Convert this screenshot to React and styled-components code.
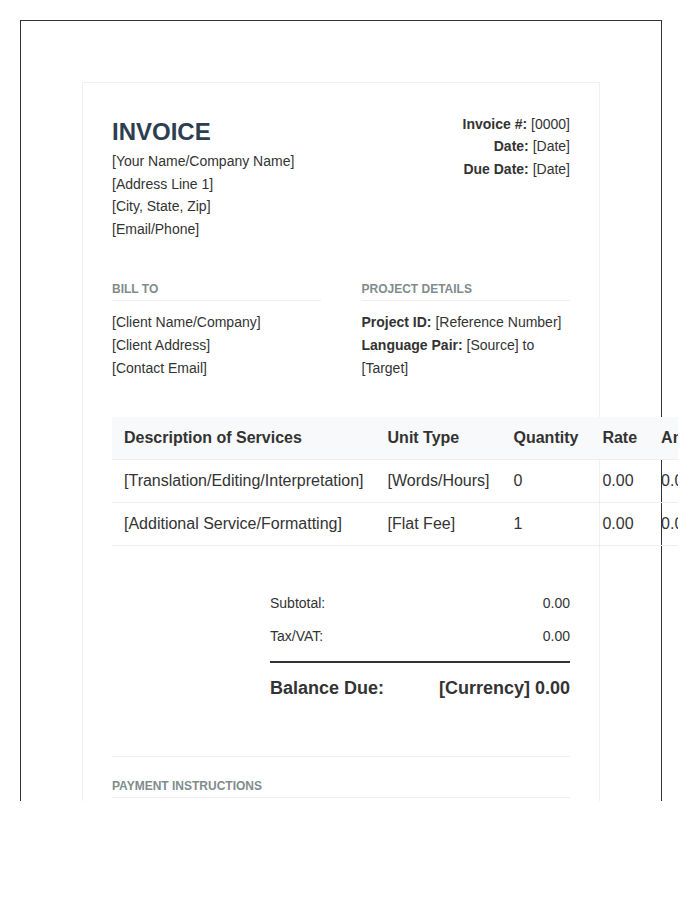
import React from "react";
import styled, { createGlobalStyle } from "styled-components";

const Global = createGlobalStyle`
  body { margin: 0; font-family: "Liberation Sans", Arial, sans-serif; color: #333; background: #fff; }
`;

const Viewport = styled.div`
  width: 678px;
  height: 801px;
  overflow: hidden;
`;
const Paper = styled.div`
  margin: 20px;
  width: 518px;
  border: 1px solid #333;
  padding: 61px 61px 61px 61px;
  min-height: 900px;
`;
const Card = styled.div`
  width: 458px;
  border: 1px solid #f0f0f0;
  padding: 30px 29px;
  font-size: 14px;
  line-height: 1.6;
`;
const Header = styled.div`
  display: flex;
  justify-content: space-between;
  align-items: flex-start;
`;
const Title = styled.h1`
  margin: 4px 0 3px;
  font-size: 24px;
  line-height: 30px;
  color: #2c3e50;
`;
const Meta = styled.div`
  text-align: right;
  line-height: 22.4px;
`;
const Lines = styled.div`
  line-height: 22.6px;
`;
const Grid = styled.div`
  display: grid;
  grid-template-columns: 1fr 1fr;
  gap: 41px;
  margin-top: 40px;
`;
const SectionTitle = styled.div`
  font-size: 12px;
  font-weight: bold;
  color: #7f8c8d;
  text-transform: uppercase;
  border-bottom: 1px solid #eee;
  padding-bottom: 2px;
  margin-bottom: 10px;
  line-height: 18px;
`;
const Table = styled.table`
  margin-top: 38px;
  border-collapse: collapse;
  white-space: nowrap;
  font-size: 16px;
  line-height: 18px;
  th {
    background: #f8f9fa;
    text-align: left;
    font-weight: bold;
    padding: 12px;
    border-bottom: 1px solid #eee;
  }
  td {
    padding: 12px;
    border-bottom: 1px solid #eee;
  }
`;
const Totals = styled.div`
  margin: 41px 0 0 auto;
  width: 300px;
`;
const TotalRow = styled.div`
  display: flex;
  justify-content: space-between;
  padding: 5px 0;
  line-height: 23px;
`;
const Balance = styled(TotalRow)`
  border-top: 2px solid #333;
  margin-top: 8px;
  padding-top: 14px;
  font-size: 18px;
  font-weight: bold;
`;
const Payment = styled.div`
  margin-top: 51px;
  border-top: 1px solid #eee;
  padding-top: 20px;
`;

export default function App() {
  return (
    <Viewport>
      <Global />
      <Paper>
        <Card>
          <Header>
            <div>
              <Title>INVOICE</Title>
              <Lines>
                [Your Name/Company Name]<br />[Address Line 1]<br />[City, State, Zip]<br />[Email/Phone]
              </Lines>
            </div>
            <Meta>
              <div><b>Invoice #:</b> [0000]</div>
              <div><b>Date:</b> [Date]</div>
              <div><b>Due Date:</b> [Date]</div>
            </Meta>
          </Header>
          <Grid>
            <div>
              <SectionTitle>Bill To</SectionTitle>
              <Lines>[Client Name/Company]<br />[Client Address]<br />[Contact Email]</Lines>
            </div>
            <div>
              <SectionTitle>Project Details</SectionTitle>
              <Lines>
                <b>Project ID:</b> [Reference Number]<br />
                <b>Language Pair:</b> [Source] to [Target]
              </Lines>
            </div>
          </Grid>
          <Table>
            <thead>
              <tr><th>Description of Services</th><th>Unit Type</th><th>Quantity</th><th>Rate</th><th>Amount</th></tr>
            </thead>
            <tbody>
              <tr><td>[Translation/Editing/Interpretation]</td><td>[Words/Hours]</td><td>0</td><td>0.00</td><td>0.00</td></tr>
              <tr><td>[Additional Service/Formatting]</td><td>[Flat Fee]</td><td>1</td><td>0.00</td><td>0.00</td></tr>
            </tbody>
          </Table>
          <Totals>
            <TotalRow><span>Subtotal:</span><span>0.00</span></TotalRow>
            <TotalRow><span>Tax/VAT:</span><span>0.00</span></TotalRow>
            <Balance><span>Balance Due:</span><span>[Currency] 0.00</span></Balance>
          </Totals>
          <Payment>
            <SectionTitle>Payment Instructions</SectionTitle>
          </Payment>
        </Card>
      </Paper>
    </Viewport>
  );
}
